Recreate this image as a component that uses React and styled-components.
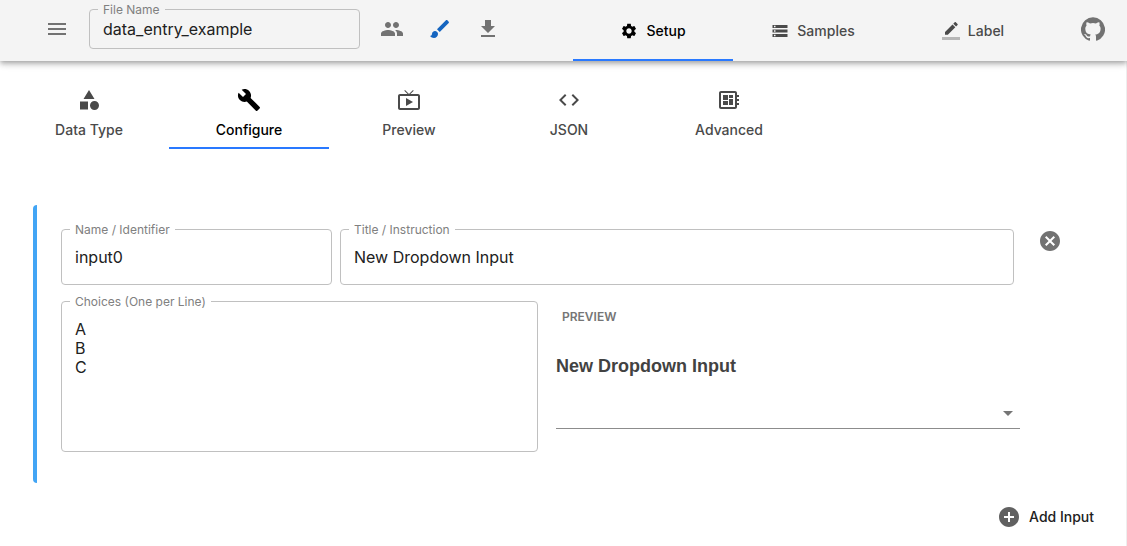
import React, { useState } from "react";
import styled, { createGlobalStyle } from "styled-components";

const GlobalStyle = createGlobalStyle`
  *, *::before, *::after { box-sizing: border-box; }
  body {
    margin: 0;
    background: #fff;
    color: #212121;
    font-family: Inter, "Liberation Sans", sans-serif;
  }
  button, input, textarea, select { font: inherit; color: inherit; }
`;

const paths = {
  menu: "M3 18h18v-2H3v2zm0-5h18v-2H3v2zm0-7v2h18V6H3z",
  people:
    "M16 11c1.66 0 2.99-1.34 2.99-3S17.66 5 16 5c-1.66 0-3 1.34-3 3s1.34 3 3 3zm-8 0c1.66 0 2.99-1.34 2.99-3S9.66 5 8 5C6.34 5 5 6.34 5 8s1.34 3 3 3zm0 2c-2.33 0-7 1.17-7 3.5V19h14v-2.5c0-2.33-4.67-3.5-7-3.5zm8 0c-.29 0-.62.02-.97.05 1.16.84 1.97 1.97 1.97 3.45V19h6v-2.5c0-2.33-4.67-3.5-7-3.5z",
  brush:
    "M7 14c-1.66 0-3 1.34-3 3 0 1.31-1.16 2-2 2 .92 1.22 2.49 2 4 2 2.21 0 4-1.79 4-4 0-1.66-1.34-3-3-3zm13.71-9.37l-1.34-1.34c-.39-.39-1.02-.39-1.41 0L9 12.25 11.75 15l8.96-8.96c.39-.39.39-1.02 0-1.41z",
  download: "M19 9h-4V3H9v6H5l7 7 7-7zM5 18v2h14v-2H5z",
  settings:
    "M19.14 12.94c.04-.3.06-.61.06-.94 0-.32-.02-.64-.07-.94l2.03-1.58c.18-.14.23-.41.12-.61l-1.92-3.32c-.12-.22-.37-.29-.59-.22l-2.39.96c-.5-.38-1.03-.7-1.62-.94l-.36-2.54c-.04-.24-.24-.41-.48-.41h-3.84c-.24 0-.43.17-.47.41l-.36 2.54c-.59.24-1.13.57-1.62.94l-2.39-.96c-.22-.08-.47 0-.59.22L2.74 8.87c-.12.21-.08.47.12.61l2.03 1.58c-.05.3-.09.63-.09.94s.02.64.07.94l-2.03 1.58c-.18.14-.23.41-.12.61l1.92 3.32c.12.22.37.29.59.22l2.39-.96c.5.38 1.03.7 1.62.94l.36 2.54c.05.24.24.41.48.41h3.84c.24 0 .44-.17.47-.41l.36-2.54c.59-.24 1.13-.56 1.62-.94l2.39.96c.22.08.47 0 .59-.22l1.92-3.32c.12-.22.07-.47-.12-.61l-2.01-1.58zM12 15.6c-1.98 0-3.6-1.62-3.6-3.6s1.62-3.6 3.6-3.6 3.6 1.62 3.6 3.6-1.62 3.6-3.6 3.6z",
  storage:
    "M2 20h20v-4H2v4zm2-3h2v2H4v-2zM2 4v4h20V4H2zm4 3H4V5h2v2zm-4 7h20v-4H2v4zm2-3h2v2H4v-2z",
  pencil:
    "M17.75 7L14 3.25l-10 10V17h3.75l10-10zm2.96-2.96c.39-.39.39-1.02 0-1.41L18.37.29c-.39-.39-1.02-.39-1.41 0L15 2.25 18.75 6l1.96-1.96z",
  github:
    "M12 .3a12 12 0 0 0-3.8 23.4c.6.1.8-.3.8-.6v-2c-3.3.7-4-1.6-4-1.6-.6-1.4-1.4-1.8-1.4-1.8-1-.7.1-.7.1-.7 1.2 0 1.9 1.2 1.9 1.2 1 1.8 2.8 1.3 3.5 1 0-.8.4-1.3.7-1.6-2.7-.3-5.5-1.3-5.5-6 0-1.2.5-2.3 1.3-3.1-.2-.4-.6-1.6 0-3.2 0 0 1-.3 3.4 1.2a11.5 11.5 0 0 1 6 0c2.3-1.5 3.3-1.2 3.3-1.2.6 1.6.2 2.8 0 3.2.9.8 1.3 1.9 1.3 3.2 0 4.6-2.8 5.6-5.5 5.9.5.4.9 1 .9 2.2v3.3c0 .3.1.7.8.6A12 12 0 0 0 12 .3",
  category:
    "M12 2l-5.5 9h11zM17.5 13a4.5 4.5 0 1 0 0 9 4.5 4.5 0 0 0 0-9zM3 13.5h8v8H3z",
  build:
    "M22.7 19l-9.1-9.1c.9-2.3.4-5-1.5-6.9-2-2-5-2.4-7.4-1.3L9 6 6 9 1.6 4.7C.4 7.1.9 10.1 2.9 12.1c1.9 1.9 4.6 2.4 6.9 1.5l9.1 9.1c.4.4 1 .4 1.4 0l2.3-2.3c.5-.4.5-1.1.1-1.4z",
  tv: "M21 6h-7.59l3.29-3.29L16 2l-4 4-4-4-.71.71L10.59 6H3c-1.1 0-2 .89-2 2v12c0 1.1.9 2 2 2h18c1.1 0 2-.9 2-2V8c0-1.11-.9-2-2-2zm0 14H3V8h18v12zM9 10v8l7-4z",
  code: "M9.4 16.6L4.8 12l4.6-4.6L8 6l-6 6 6 6 1.4-1.4zm5.2 0l4.6-4.6-4.6-4.6L16 6l6 6-6 6-1.4-1.4z",
  board:
    "M22 9V7h-2V5c0-1.1-.9-2-2-2H4c-1.1 0-2 .9-2 2v14c0 1.1.9 2 2 2h14c1.1 0 2-.9 2-2v-2h2v-2h-2v-2h2v-2h-2V9h2zm-4 10H4V5h14v14zM6 13h5v4H6zm6-6h4v3h-4zM6 7h5v5H6zm6 4h4v6h-4z",
  cancel:
    "M12 2C6.47 2 2 6.47 2 12s4.47 10 10 10 10-4.47 10-10S17.53 2 12 2zm5 13.59L15.59 17 12 13.41 8.41 17 7 15.59 10.59 12 7 8.41 8.41 7 12 10.59 15.59 7 17 8.41 13.41 12 17 15.59z",
  add: "M12 2C6.48 2 2 6.48 2 12s4.48 10 10 10 10-4.48 10-10S17.52 2 12 2zm5 11h-4v4h-2v-4H7v-2h4V7h2v4h4v2z",
  arrow: "M7 10l5 5 5-5z",
};

const Svg = styled.svg`
  display: block;
  flex: none;
  width: ${(p) => p.$size}px;
  height: ${(p) => p.$size}px;
  fill: currentColor;
`;

function Icon({ name, size = 24 }) {
  return (
    <Svg $size={size} viewBox="0 0 24 24" aria-hidden="true">
      <path d={paths[name]} />
      {name === "pencil" && <path fillOpacity=".36" d="M0 20h24v4H0z" />}
    </Svg>
  );
}

const Page = styled.div`
  min-height: 100vh;
  display: flex;
  flex-direction: column;
`;

const Header = styled.header`
  position: relative;
  z-index: 1;
  display: flex;
  align-items: stretch;
  min-height: 61px;
  padding: 0 10px 0 33px;
  background: #f4f4f4;
  box-shadow: 0 2px 4px -1px rgba(0, 0, 0, 0.2), 0 4px 5px 0 rgba(0, 0, 0, 0.14),
    0 1px 10px 0 rgba(0, 0, 0, 0.12);
`;

const Tools = styled.div`
  display: flex;
  align-items: center;
  padding-bottom: 3px;
`;

const FileField = styled.div`
  display: flex;
  align-items: center;
  padding: 0 8px 3px;
`;

const IconButton = styled.button`
  display: flex;
  padding: ${(p) => (p.$flush ? 0 : 12)}px;
  border: 0;
  background: none;
  color: ${(p) => p.$color || "#727272"};
  cursor: pointer;
`;

const GithubLink = styled.a`
  display: flex;
  padding: 12px;
  color: #727272;
`;

const Tabs = styled.nav`
  display: flex;
  margin-left: ${(p) => (p.$end ? "auto" : "9px")};
  margin-right: ${(p) => (p.$end ? 16 : 0)}px;
  margin-top: ${(p) => (p.$end ? 0 : 16)}px;
`;

const Tab = styled.button`
  display: flex;
  flex-direction: ${(p) => (p.$stacked ? "column" : "row")};
  align-items: center;
  justify-content: ${(p) => (p.$stacked ? "flex-start" : "center")};
  gap: ${(p) => (p.$stacked ? 6 : 8)}px;
  width: 160px;
  padding: ${(p) => (p.$stacked ? "11px 12px 5px" : "2px 12px 0")};
  border: 0;
  border-bottom: 2px solid ${(p) => (p.$active ? "#2979ff" : "transparent")};
  background: none;
  color: ${(p) => (p.$active ? "#000" : "#4a4a4a")};
  font-size: 14px;
  font-weight: 500;
  line-height: 24px;
  cursor: pointer;
`;

const Content = styled.main`
  flex: 1;
  padding-bottom: 16px;
  border-right: 1px solid #eee;
`;

const Panel = styled.section`
  display: flex;
  align-items: flex-start;
  gap: 18px;
  margin: 56px 32px 0 33px;
  padding: 24px 32px 31px 24px;
  border-left: 4px solid #42a5f5;
  border-radius: 4px;
`;

const PanelBody = styled.div`
  flex: 1;
  min-width: 0;
  display: flex;
  flex-direction: column;
  gap: 16px;
`;

const FieldRow = styled.div`
  display: flex;
  gap: 8px;
  padding-right: 6px;
`;

const ChoiceRow = styled.div`
  display: grid;
  grid-template-columns: 477fr 464fr;
  gap: 18px;
`;

const Outline = styled.div`
  position: relative;
  display: flex;
  min-width: 0;
  flex: ${(p) => (p.$grow ? "1" : "0 0 271px")};
  border: 1px solid #c0c0c0;
  border-radius: 4px;
`;

const FieldLabel = styled.label`
  position: absolute;
  top: -8px;
  left: 8px;
  padding: 0 5px;
  background: ${(p) => p.$bg || "#fff"};
  color: #808080;
  font-size: 12px;
  line-height: 16px;
`;

const TextInput = styled.input`
  width: 100%;
  height: ${(p) => (p.$dense ? 38 : 54)}px;
  padding: 0 13px;
  border: 0;
  outline: 0;
  background: none;
  font-size: 16px;
`;

const TextArea = styled.textarea`
  display: block;
  width: 100%;
  padding: 18px 13px 17px;
  border: 0;
  outline: 0;
  resize: none;
  background: none;
  font-size: 16px;
  line-height: 19px;
`;

const Preview = styled.div`
  display: flex;
  flex-direction: column;
  padding-top: 8px;
`;

const PreviewTag = styled.span`
  padding-left: 6px;
  color: #757575;
  font-size: 12px;
  font-weight: 600;
  line-height: 16px;
`;

const PreviewTitle = styled.label`
  margin-top: 29px;
  color: #424242;
  font-family: "Liberation Sans", Arial, sans-serif;
  font-size: 18px;
  font-weight: 700;
  line-height: 24px;
`;

const SelectBox = styled.div`
  position: relative;
  margin-top: 19px;
  border-bottom: 1px solid #8c8c8c;
  color: #757575;

  ${Svg} {
    position: absolute;
    top: 4px;
    right: 0;
    pointer-events: none;
  }
`;

const Select = styled.select`
  display: block;
  width: 100%;
  height: 31px;
  padding: 0 24px 0 0;
  border: 0;
  outline: 0;
  appearance: none;
  background: none;
  font-size: 16px;
`;

const Actions = styled.div`
  display: flex;
  justify-content: flex-end;
  padding: 22px 32px 0 0;
`;

const AddButton = styled.button`
  display: flex;
  align-items: center;
  gap: 8px;
  padding: 0;
  border: 0;
  background: none;
  color: #212121;
  font-size: 14px;
  font-weight: 500;
  line-height: 24px;
  cursor: pointer;

  ${Svg} {
    color: #616161;
  }
`;

function Field({ id, label, grow, dense, bg, value, onChange }) {
  return (
    <Outline $grow={grow}>
      <FieldLabel htmlFor={id} $bg={bg}>{label}</FieldLabel>
      <TextInput id={id} $dense={dense} value={value} onChange={(e) => onChange(e.target.value)} />
    </Outline>
  );
}

const mainTabs = [
  ["Setup", "settings"],
  ["Samples", "storage"],
  ["Label", "pencil"],
];

const setupTabs = [
  ["Data Type", "category"],
  ["Configure", "build"],
  ["Preview", "tv"],
  ["JSON", "code"],
  ["Advanced", "board"],
];

export default function App() {
  const [fileName, setFileName] = useState("data_entry_example");
  const [mainTab, setMainTab] = useState("Setup");
  const [setupTab, setSetupTab] = useState("Configure");
  const [name, setName] = useState("input0");
  const [title, setTitle] = useState("New Dropdown Input");
  const [choices, setChoices] = useState("A\nB\nC");

  return (
    <Page>
      <GlobalStyle />
      <Header>
        <Tools>
          <IconButton aria-label="Menu"><Icon name="menu" /></IconButton>
        </Tools>
        <FileField>
          <Field id="file" label="File Name" dense bg="#f4f4f4" value={fileName} onChange={setFileName} />
        </FileField>
        <Tools>
          <IconButton aria-label="Collaborators"><Icon name="people" /></IconButton>
          <IconButton aria-label="Theme" $color="#1565c0"><Icon name="brush" /></IconButton>
          <IconButton aria-label="Download"><Icon name="download" /></IconButton>
        </Tools>
        <Tabs $end>
          {mainTabs.map(([label, icon]) => (
            <Tab key={label} $active={mainTab === label} onClick={() => setMainTab(label)}>
              <Icon name={icon} size={18} />
              {label}
            </Tab>
          ))}
        </Tabs>
        <Tools>
          <GithubLink href="#github" aria-label="GitHub"><Icon name="github" /></GithubLink>
        </Tools>
      </Header>
      <Content>
        <Tabs>
          {setupTabs.map(([label, icon]) => (
            <Tab key={label} $stacked $active={setupTab === label} onClick={() => setSetupTab(label)}>
              <Icon name={icon} />
              {label}
            </Tab>
          ))}
        </Tabs>
        <Panel>
          <PanelBody>
            <FieldRow>
              <Field id="name" label="Name / Identifier" value={name} onChange={setName} />
              <Field id="title" label="Title / Instruction" grow value={title} onChange={setTitle} />
            </FieldRow>
            <ChoiceRow>
              <Outline $grow>
                <FieldLabel htmlFor="choices">Choices (One per Line)</FieldLabel>
                <TextArea id="choices" rows={6} value={choices} onChange={(e) => setChoices(e.target.value)} />
              </Outline>
              <Preview>
                <PreviewTag>PREVIEW</PreviewTag>
                <PreviewTitle htmlFor="preview">{title}</PreviewTitle>
                <SelectBox>
                  <Select id="preview" defaultValue="">
                    <option value="" />
                    {choices.split("\n").map((c) => <option key={c}>{c}</option>)}
                  </Select>
                  <Icon name="arrow" />
                </SelectBox>
              </Preview>
            </ChoiceRow>
          </PanelBody>
          <IconButton $flush aria-label="Remove input"><Icon name="cancel" /></IconButton>
        </Panel>
        <Actions>
          <AddButton><Icon name="add" />Add Input</AddButton>
        </Actions>
      </Content>
    </Page>
  );
}
